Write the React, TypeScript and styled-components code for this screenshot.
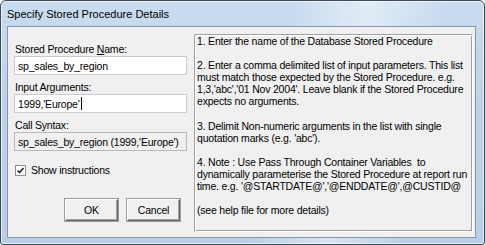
import styled, { createGlobalStyle } from 'styled-components'

const GlobalStyle = createGlobalStyle`
	html, body {
		margin: 0;
		padding: 0;
		background: #ffffff;
	}
	* {
		box-sizing: border-box;
	}
`

const Window = styled.div`
	width: 485px;
	height: 245px;
	display: flex;
	flex-direction: column;
	border: 1px solid #3e4a57;
	border-radius: 6px 6px 3px 3px;
	background:
		linear-gradient(100deg, rgba(255, 255, 255, 0) 55%, rgba(255, 255, 255, 0.45) 70%, rgba(255, 255, 255, 0) 85%),
		linear-gradient(180deg, #c9dcef 0%, #bed3e9 40%, #b9cfe7 100%);
	box-shadow: inset 0 0 0 1px rgba(255, 255, 255, 0.6);
	overflow: hidden;
`

const TitleBar = styled.div`
	height: 25px;
	flex: none;
	display: flex;
	align-items: center;
	padding: 0 0 0 6px;
	font-family: 'Liberation Sans', Arial, sans-serif;
	font-size: 11px;
	color: #000;
`

const Client = styled.div`
	flex: 1;
	display: flex;
	gap: 7px;
	margin: 0 8px 6px 6px;
	padding: 7px 2px 5px 6px;
	background: #f0f0f0;
	border: 1px solid #8596aa;
	font-family: 'Liberation Sans', Arial, sans-serif;
	font-size: 10.5px;
	letter-spacing: -0.2px;
	color: #000;
`

const LeftColumn = styled.div`
	width: 173px;
	flex: none;
	display: flex;
	flex-direction: column;
`

const Label = styled.div<{ $gap: number }>`
	height: 13px;
	line-height: 13px;
	margin-top: ${({ $gap }) => $gap}px;
	padding-left: 1px;
	white-space: nowrap;

	u {
		text-decoration: underline;
		text-underline-offset: 1px;
	}
`

const Field = styled.div<{ $readOnly?: boolean }>`
	height: 19px;
	display: flex;
	align-items: center;
	padding: 0 3px;
	background: ${({ $readOnly }) => ($readOnly ? '#f0f0f0' : '#ffffff')};
	border: 1px solid;
	border-color: #abadb3 #e3e9ef #e3e9ef #abadb3;
	outline: 1px solid ${({ $readOnly }) => ($readOnly ? '#b9b9b9' : '#c8ccd2')};
	outline-offset: -1px;
	white-space: nowrap;
`

const Caret = styled.span`
	display: inline-block;
	width: 1px;
	height: 13px;
	margin-left: 1px;
	background: #000;
`

const CheckRow = styled.label`
	display: flex;
	align-items: center;
	gap: 5px;
	height: 14px;
	margin-top: 12px;
	padding-left: 1px;
`

const CheckBox = styled.span`
	width: 11px;
	height: 11px;
	display: flex;
	align-items: center;
	justify-content: center;
	background: #ffffff;
	border: 1px solid #8e8f8f;
`

const ButtonRow = styled.div`
	display: flex;
	justify-content: flex-end;
	gap: 9px;
	margin-top: 22px;
	padding-right: 7px;
`

const Button = styled.button`
	width: 53px;
	height: 22px;
	padding: 0;
	font-family: 'Liberation Sans', Arial, sans-serif;
	font-size: 10.5px;
	letter-spacing: -0.2px;
	color: #000;
	background: #f0f0f0;
	border: 1px solid;
	border-color: #ffffff #6b6b6b #6b6b6b #ffffff;
	box-shadow: inset -1px -1px 0 #a0a0a0, 0 0 0 1px #9a9a9a;
`

const Instructions = styled.div`
	flex: 1;
	padding: 0 2px;
	border: 1px solid;
	border-color: #a0a0a0 #ffffff #ffffff #a0a0a0;
	box-shadow: inset 1px 1px 0 #ffffff, inset -1px -1px 0 #a0a0a0;
	line-height: 12.1px;
	white-space: pre;
	overflow: hidden;
`

const Line = styled.div`
	height: 12.1px;
`

const lines = [
	'1. Enter the name of the Database Stored Procedure',
	'',
	'2. Enter a comma delimited list of input parameters. This list',
	'must match those expected by the Stored Procedure. e.g.',
	"1,3,'abc','01 Nov 2004'. Leave blank if the Stored Procedure",
	'expects no arguments.',
	'',
	'3. Delimit Non-numeric arguments in the list with single',
	"quotation marks (e.g. 'abc').",
	'',
	'4. Note : Use Pass Through Container Variables  to',
	'dynamically parameterise the Stored Procedure at report run',
	"time. e.g. '@STARTDATE@','@ENDDATE@',@CUSTID@",
	'',
	'(see help file for more details)',
]

export default function App() {
	return (
		<>
			<GlobalStyle />
			<Window>
				<TitleBar>Specify Stored Procedure Details</TitleBar>
				<Client>
					<LeftColumn>
						<Label $gap={9}>
							Stored Procedure <u>N</u>ame:
						</Label>
						<Field>sp_sales_by_region</Field>
						<Label $gap={6}>Input Arguments:</Label>
						<Field>
							1999,'Europe'
							<Caret />
						</Field>
						<Label $gap={6}>Call Syntax:</Label>
						<Field $readOnly>sp_sales_by_region (1999,'Europe')</Field>
						<CheckRow>
							<CheckBox>
								<svg width="9" height="9" viewBox="0 0 9 9">
									<path d="M1.5 4.5 L3.5 6.5 L7.5 2" fill="none" stroke="#222" strokeWidth="1.6" />
								</svg>
							</CheckBox>
							Show instructions
						</CheckRow>
						<ButtonRow>
							<Button type="button">OK</Button>
							<Button type="button">Cancel</Button>
						</ButtonRow>
					</LeftColumn>
					<Instructions>
						{lines.map((text, i) => (
							<Line key={i}>{text}</Line>
						))}
					</Instructions>
				</Client>
			</Window>
		</>
	)
}
